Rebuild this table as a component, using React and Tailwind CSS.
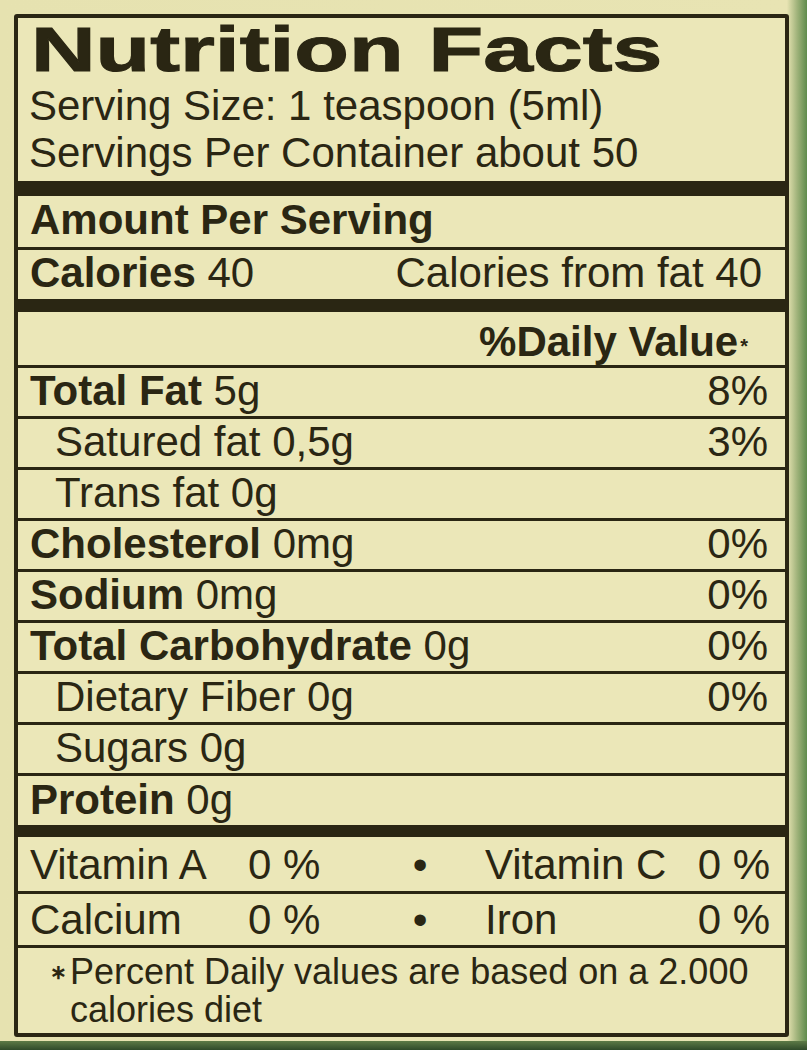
import React from 'react'

const ink = 'text-[#2a2613]'

const nutrients = [
  { label: 'Total Fat', value: '5g', dv: '8%', bold: true },
  { label: 'Satured fat', value: '0,5g', dv: '3%' },
  { label: 'Trans fat', value: '0g' },
  { label: 'Cholesterol', value: '0mg', dv: '0%', bold: true },
  { label: 'Sodium', value: '0mg', dv: '0%', bold: true },
  { label: 'Total Carbohydrate', value: '0g', dv: '0%', bold: true },
  { label: 'Dietary Fiber', value: '0g', dv: '0%' },
  { label: 'Sugars', value: '0g' },
]

const NutrientRow = ({ label, value, dv, bold }) => (
  <div className="flex justify-between h-[51px] pt-[2px] border-b-[3px] border-[#2a2613] pr-[17px] text-[42px] leading-[42px]">
    <p className={bold ? 'pl-[12px]' : 'pl-[37px]'}>
      <span className={bold ? 'font-bold' : ''}>{label}</span> {value}
    </p>
    {dv && <p>{dv}</p>}
  </div>
)

const VitaminRow = ({ a, aPct, b, bPct, pt, h }) => (
  <div className="flex text-[42px] leading-[42px] pl-[12px] pr-[15px] border-b-[3px] border-[#2a2613]" style={{ paddingTop: pt, height: h }}>
    <span className="w-[218px]">{a}</span>
    <span className="w-[157px]">{aPct}</span>
    <span className="w-[30px] text-center">•</span>
    <span className="ml-[50px] flex-1">{b}</span>
    <span>{bPct}</span>
  </div>
)

export default function App() {
  return (
    <div className="w-[807px] h-[1050px] overflow-hidden flex flex-col bg-[linear-gradient(to_right,#e6e2b0_0%,#e8e4b3_97.5%,#9fb27a_98.8%,#5f8c4c_100%)] font-['Liberation_Sans',Arial,sans-serif]">
      <div className="pt-[14px] pl-[14px]">
        <div className={`w-[775px] h-[1023px] border-4 border-[#2a2613] rounded-[3px] bg-[#ebe7b8] flex flex-col ${ink}`}>
          {/* header */}
          <div className="pl-[13px] h-[63px]">
            <h1 className="inline-block origin-left scale-x-[1.42] font-bold text-[63px] leading-[63px] [-webkit-text-stroke:1px_#2a2613]">Nutrition Facts</h1>
          </div>
          <div className="mt-[1px] pl-[11px] text-[42px] leading-[47px]">
            <p>Serving Size: 1 teaspoon (5ml)</p>
            <p>Servings Per Container about 50</p>
          </div>
          <div className="mt-[5px] h-[15px] bg-[#2a2613]"></div>

          <div className="h-[54px] pt-[3px] pl-[12px] border-b-[3px] border-[#2a2613] text-[42px] leading-[42px] font-bold">
            Amount Per Serving
          </div>
          <div className="h-[49px] pt-[2px] pl-[12px] pr-[23px] flex justify-between text-[42px] leading-[42px]">
            <p><span className="font-bold">Calories</span> 40</p>
            <p>Calories from fat 40</p>
          </div>
          <div className="h-[13px] bg-[#2a2613]"></div>

          <div className="h-[56px] pt-[9px] pr-[37px] flex justify-end border-b-[3px] border-[#2a2613] text-[42px] leading-[42px] font-bold">
            <p>%Daily Value<sup className="text-[20px] relative -top-[3px] ml-[2px]">*</sup></p>
          </div>

          {nutrients.map((n) => (
            <NutrientRow key={n.label} {...n} />
          ))}

          <div className="h-[49px] pt-[3px] pl-[12px] text-[42px] leading-[42px]">
            <span className="font-bold">Protein</span> 0g
          </div>
          <div className="h-[12px] bg-[#2a2613]"></div>

          <VitaminRow a="Vitamin A" aPct="0 %" b="Vitamin C" bPct="0 %" pt={7} h={57} />
          <VitaminRow a="Calcium" aPct="0 %" b="Iron" bPct="0 %" pt={5} h={54} />

          <div className="flex pl-[32px] pt-[5px] text-[36px] leading-[38px]">
            <span className="w-[20px] font-bold text-[20px] leading-[38px]">∗</span>
            <p className="w-[700px]">Percent Daily values are based on a 2.000 calories diet</p>
          </div>
        </div>
      </div>
      <div className="mt-auto h-[9px] bg-[linear-gradient(to_bottom,#5d7a46,#2f4a2a)]"></div>
    </div>
  )
}
